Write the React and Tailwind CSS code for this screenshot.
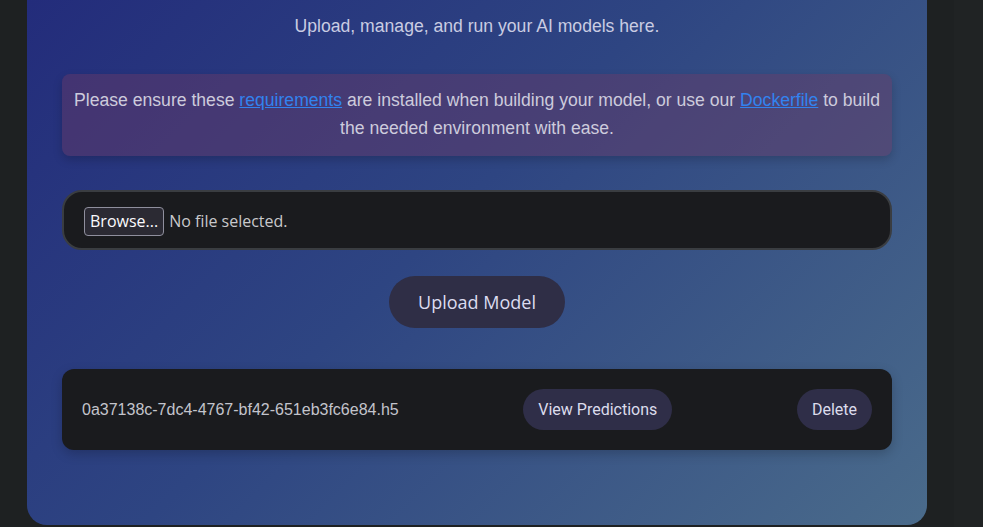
export default function App() {
  const models = ['0a37138c-7dc4-4767-bf42-651eb3fc6e84.h5'];

  return (
    <div className="flex min-h-screen w-full bg-[#1e2122]">
      <div className="w-[954px] shrink-0">
        <div className="mx-auto w-[900px] rounded-b-[20px] bg-[linear-gradient(135deg,#232c7b_0%,#2e4582_45%,#4a6b8b_100%)] px-[35px] pt-[12px] pb-[75px]">
          <p className="text-center font-['Liberation_Sans',Arial,sans-serif] text-[17.6px] leading-[28px] text-[#c9cce2]">
            Upload, manage, and run your AI models here.
          </p>

          <div className="mt-[34px] rounded-[8px] bg-[rgba(110,58,100,0.42)] px-[10px] pt-[12px] pb-[14px] text-center font-['Liberation_Sans',Arial,sans-serif] text-[17.6px] leading-[28px] text-[#cdcbdc] shadow-[0_4px_10px_rgba(0,0,0,0.18)]">
            Please ensure these{' '}
            <a href="#" className="text-[#3283ef] underline">requirements</a>{' '}
            are installed when building your model, or use our{' '}
            <a href="#" className="text-[#3283ef] underline">Dockerfile</a>{' '}
            to build the needed environment with ease.
          </div>

          <div className="mt-[34px] flex h-[60px] items-center rounded-[20px] border-2 border-[#3a3d41] bg-[#1a1b1e] px-[20px] pt-[2px] font-['Open_Sans',sans-serif] text-[16px]">
            <span className="rounded-[4px] border border-[#8f8f9d] bg-[#2b2a33] px-[5px] py-[2px] leading-[23px] text-[#fbfbfe]">
              Browse...
            </span>
            <span className="ml-[5px] text-[#c9c9cc]">No file selected.</span>
          </div>

          <div className="mt-[26px] flex justify-center">
            <button className="h-[52px] rounded-full bg-[#2f2e46] px-[29px] font-['Open_Sans',sans-serif] text-[18px] text-[#dcdcf0]">
              Upload Model
            </button>
          </div>

          <div className="mt-[41px] flex flex-col gap-3">
            {models.map((m) => (
              <div
                key={m}
                className="flex items-center justify-between rounded-[12px] bg-[#1a1b1e] px-[20px] py-[20px] shadow-[0_4px_12px_rgba(0,0,0,0.2)]"
              >
                <span className="font-['Liberation_Sans',Arial,sans-serif] text-[16px] text-[#c3c4cc]">{m}</span>
                <button className="h-[41px] rounded-full bg-[#2f2e48] px-[15px] font-['Roboto',sans-serif] text-[16px] text-[#dcdcec]">
                  View Predictions
                </button>
                <button className="h-[41px] rounded-full bg-[#2f2e48] px-[15px] font-['Roboto',sans-serif] text-[16px] text-[#dcdcec]">
                  Delete
                </button>
              </div>
            ))}
          </div>
        </div>
      </div>
      <div className="flex-1 bg-[#202324]" />
    </div>
  );
}
